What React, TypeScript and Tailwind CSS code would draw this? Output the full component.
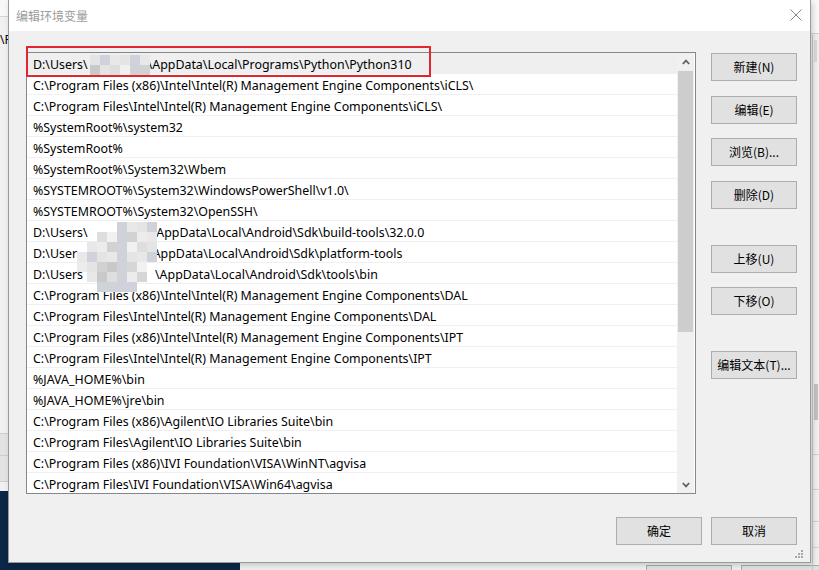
import React from "react";

const ROWS: { pre?: string; gap?: number; text: string }[] = [
  { pre: "D:\\Users\\", gap: 60, text: "\\AppData\\Local\\Programs\\Python\\Python310" },
  { text: "C:\\Program Files (x86)\\Intel\\Intel(R) Management Engine Components\\iCLS\\" },
  { text: "C:\\Program Files\\Intel\\Intel(R) Management Engine Components\\iCLS\\" },
  { text: "%SystemRoot%\\system32" },
  { text: "%SystemRoot%" },
  { text: "%SystemRoot%\\System32\\Wbem" },
  { text: "%SYSTEMROOT%\\System32\\WindowsPowerShell\\v1.0\\" },
  { text: "%SYSTEMROOT%\\System32\\OpenSSH\\" },
  { pre: "D:\\Users\\", gap: 64, text: "\\AppData\\Local\\Android\\Sdk\\build-tools\\32.0.0" },
  { pre: "D:\\User", gap: 71, text: "\\AppData\\Local\\Android\\Sdk\\platform-tools" },
  { pre: "D:\\Users", gap: 72, text: "\\AppData\\Local\\Android\\Sdk\\tools\\bin" },
  { text: "C:\\Program Files (x86)\\Intel\\Intel(R) Management Engine Components\\DAL" },
  { text: "C:\\Program Files\\Intel\\Intel(R) Management Engine Components\\DAL" },
  { text: "C:\\Program Files (x86)\\Intel\\Intel(R) Management Engine Components\\IPT" },
  { text: "C:\\Program Files\\Intel\\Intel(R) Management Engine Components\\IPT" },
  { text: "%JAVA_HOME%\\bin" },
  { text: "%JAVA_HOME%\\jre\\bin" },
  { text: "C:\\Program Files (x86)\\Agilent\\IO Libraries Suite\\bin" },
  { text: "C:\\Program Files\\Agilent\\IO Libraries Suite\\bin" },
  { text: "C:\\Program Files (x86)\\IVI Foundation\\VISA\\WinNT\\agvisa" },
  { text: "C:\\Program Files\\IVI Foundation\\VISA\\Win64\\agvisa" },
];

const PALETTE = ["#e4e4e4", "#d6d6d6", "#ececec", "#cfd3d9", "#dedede", "#c9c9c9", "#e8e8e8", "#d2d2d2", "#f1f1f1"];

function Mosaic({ left, top, cell, pattern }: { left: number; top: number; cell: number; pattern: string[] }) {
  return (
    <div className="absolute pointer-events-none" style={{ left, top }}>
      {pattern.map((r, ri) => (
        <div key={ri} className="flex">
          {r.split("").map((ch, ci) => (
            <div
              key={ci}
              style={{
                width: cell,
                height: cell,
                background: ch === "." ? "transparent" : PALETTE[(ri * 5 + ci * 3 + ri * ci) % PALETTE.length],
              }}
            />
          ))}
        </div>
      ))}
    </div>
  );
}

function Btn({ label, className = "" }: { label: string; className?: string }) {
  return (
    <div
      className={
        "w-[86px] h-[28px] shrink-0 border border-[#adadad] bg-[#e1e1e1] flex items-center justify-center text-[12px] text-black leading-none " +
        className
      }
    >
      {label}
    </div>
  );
}

export default function App() {
  return (
    <div className="relative w-[819px] h-[570px] overflow-hidden bg-[#f0f0f0] font-['Noto_Sans','Noto_Sans_CJK_SC',sans-serif]">
      {/* background windows behind dialog */}
      <div className="absolute left-0 top-0 w-[8px] h-[17px] bg-[#f7f7f7] border-b border-[#d4d4d4]" />
      <div className="absolute left-0 top-[34px] text-[12px] leading-none text-black">\P</div>
      <div className="absolute left-0 top-[433px] w-[8px] h-[49px] bg-[#e3e3e3] border-t border-b border-[#cdcdcd]" />
      <div className="absolute left-0 top-[455px] w-[8px] h-px bg-[#cdcdcd]" />
      <div className="absolute left-0 top-[491px] w-[240px] h-[79px] bg-[#0b2747]" />
      <div className="absolute left-[646px] top-[565px] w-[86px] h-[20px] border border-[#adadad] bg-[#e1e1e1]" />
      <div className="absolute left-[741px] top-[565px] w-[86px] h-[20px] border border-[#adadad] bg-[#e1e1e1]" />
      <div className="absolute left-[811px] top-0 w-[8px] h-[34px] bg-[#fafafa] border-b border-[#d0d0d0]" />
      <div className="absolute left-[812px] top-[35px] w-px h-[535px] bg-[#c8c8c8]" />
      <div className="absolute left-[814px] top-[40px] w-[3px] h-[22px] bg-[#dadada]" />
      <div className="absolute left-[814px] top-[384px] w-[4px] h-[36px] bg-[#c2c2c2]" />
      <div className="absolute left-[813px] top-[454px] w-[6px] h-px bg-[#d0d0d0]" />
      <div className="absolute left-[813px] top-[489px] w-[6px] h-px bg-[#d0d0d0]" />
      <div className="absolute left-[813px] top-[521px] w-[6px] h-px bg-[#d0d0d0]" />
      <div className="absolute left-[813px] top-[547px] w-[6px] h-px bg-[#d0d0d0]" />

      {/* dialog window */}
      <div className="absolute left-[8px] top-0 w-[803px] h-[563px] border border-t-0 border-[#9a9a9a] bg-[#f0f0f0] flex flex-col shadow-[2px_2px_6px_rgba(0,0,0,0.18)]">
        {/* title bar */}
        <div className="h-[31px] shrink-0 bg-white flex items-center justify-between pl-[7px] pr-[8px]">
          <span className="text-[12px] leading-none text-[#9b9b9b] font-['Noto_Sans_CJK_SC',sans-serif]">编辑环境变量</span>
          <svg width="12" height="12" viewBox="0 0 12 12" className="mt-[-1px]">
            <path d="M0.5 0.5 L11.5 11.5 M11.5 0.5 L0.5 11.5" stroke="#8a8a8a" strokeWidth="1" fill="none" />
          </svg>
        </div>

        {/* body */}
        <div className="relative flex-1 flex flex-col pl-[17px] pt-[21px] pr-[13px]">
          <div className="flex">
            {/* list box */}
            <div className="relative w-[670px] h-[442px] border border-[#828790] bg-white flex overflow-hidden">
              <div className="flex-1 flex flex-col">
                {ROWS.map((r, i) => (
                  <div
                    key={i}
                    className={
                      "h-[21px] shrink-0 flex items-center pt-[5px] pl-[6px] text-[12.4px] text-black whitespace-nowrap leading-none border-b border-[#f0f0f0] " +
                      (i === 0 ? "bg-[#efefef]" : "")
                    }
                  >
                    {r.pre && <span>{r.pre}</span>}
                    {r.gap && <span className="inline-block" style={{ width: r.gap }} />}
                    <span>{r.text}</span>
                  </div>
                ))}
              </div>
              {/* scrollbar */}
              <div className="w-[17px] shrink-0 bg-[#f0f0f0] flex flex-col">
                <div className="h-[17px] flex items-center justify-center">
                  <svg width="8" height="6" viewBox="0 0 8 6">
                    <path d="M0.8 5 L4 1.6 L7.2 5" stroke="#606060" strokeWidth="1.8" fill="none" />
                  </svg>
                </div>
                <div className="mt-px mx-px h-[261px] bg-[#cdcdcd]" />
                <div className="flex-1" />
                <div className="h-[17px] flex items-center justify-center">
                  <svg width="8" height="6" viewBox="0 0 8 6">
                    <path d="M0.8 1 L4 4.4 L7.2 1" stroke="#606060" strokeWidth="1.8" fill="none" />
                  </svg>
                </div>
              </div>
              <div className="w-px shrink-0 bg-white" />

              {/* blurred user names */}
              <Mosaic left={63} top={2} cell={10} pattern={["111111", "111111"]} />
              <Mosaic
                left={50}
                top={169}
                cell={10}
                pattern={["....1111", "..111111", ".1111111", "11111111", "1111111.", ".111111.", "..1111.."]}
              />
            </div>

            {/* side buttons */}
            <div className="ml-[15px] mt-px flex flex-col font-['Noto_Sans_CJK_SC',sans-serif]">
              <Btn label="新建(N)" />
              <Btn label="编辑(E)" className="mt-[15px]" />
              <Btn label="浏览(B)..." className="mt-[14px]" />
              <Btn label="删除(D)" className="mt-[15px]" />
              <Btn label="上移(U)" className="mt-[36px]" />
              <Btn label="下移(O)" className="mt-[14px]" />
              <Btn label="编辑文本(T)..." className="mt-[36px]" />
            </div>
          </div>

          {/* bottom buttons */}
          <div className="mt-[23px] flex justify-end gap-[9px] font-['Noto_Sans_CJK_SC',sans-serif]">
            <Btn label="确定" />
            <Btn label="取消" />
          </div>

          {/* resize grip */}
          <svg className="absolute right-[7px] bottom-[4px]" width="8" height="8" viewBox="0 0 8 8">
            <rect x="6" y="0" width="2" height="2" fill="#a8a8a8" />
            <rect x="3" y="3" width="2" height="2" fill="#a8a8a8" />
            <rect x="6" y="3" width="2" height="2" fill="#a8a8a8" />
            <rect x="0" y="6" width="2" height="2" fill="#a8a8a8" />
            <rect x="3" y="6" width="2" height="2" fill="#a8a8a8" />
            <rect x="6" y="6" width="2" height="2" fill="#a8a8a8" />
          </svg>
        </div>
      </div>

      {/* red highlight box */}
      <div className="absolute left-[26px] top-[46px] w-[405px] h-[31px] border-2 border-[#e3262e] pointer-events-none" />
    </div>
  );
}
